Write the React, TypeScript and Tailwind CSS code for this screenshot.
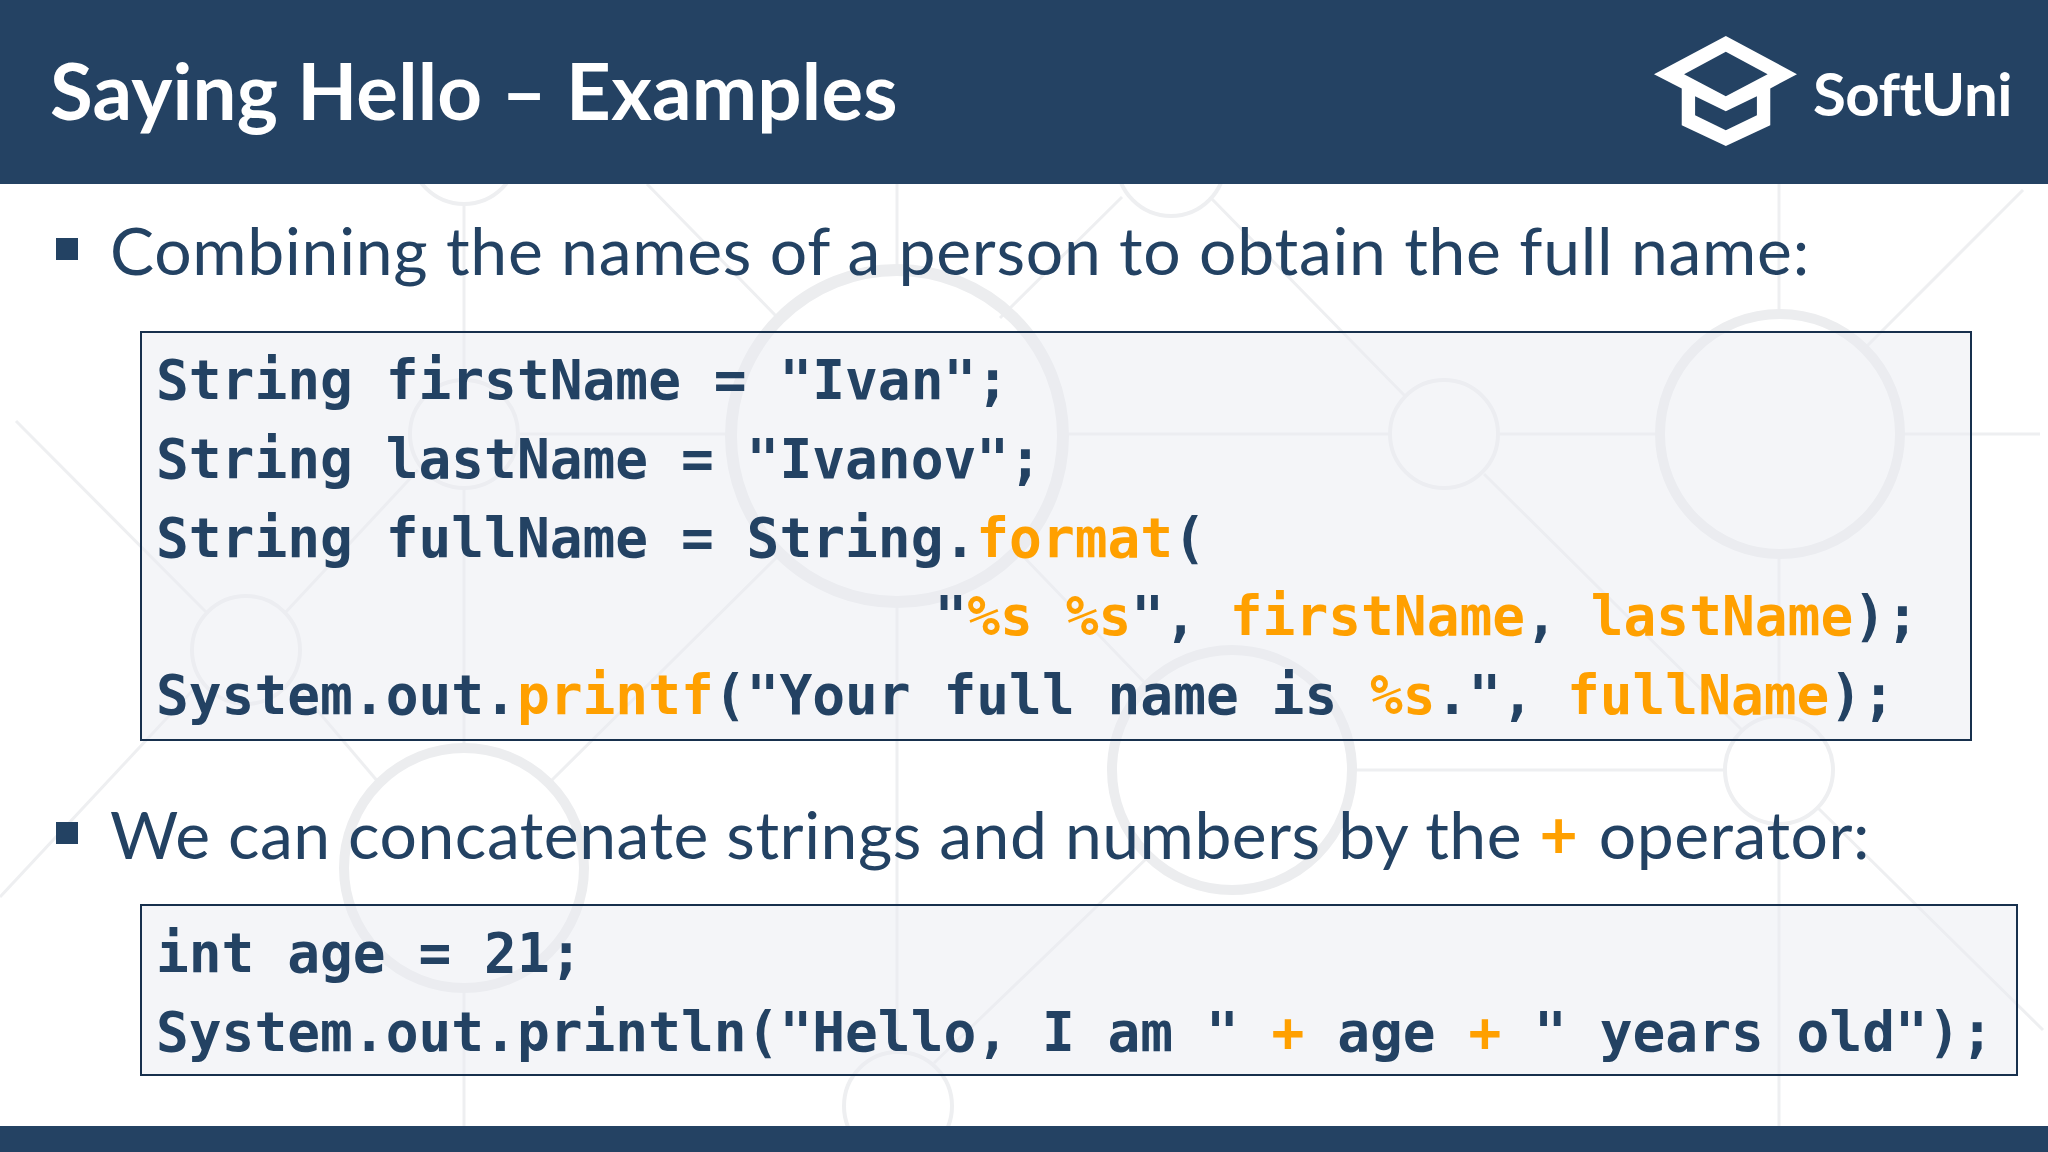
function Pattern() {
  const big: [number, number, number][] = [
    [897, 436, 166],
    [1780, 434, 120],
    [464, 868, 120],
    [1232, 770, 120],
  ];
  const small: [number, number][] = [
    [464, 434],
    [1444, 434],
    [246, 650],
    [1779, 770],
    [898, 1106],
    [464, 150],
    [1171, 162],
  ];
  const lines: [number, number, number, number][] = [
    [518, 434, 728, 434],
    [1064, 434, 1390, 434],
    [1498, 434, 1658, 434],
    [1902, 434, 2040, 434],
    [1354, 770, 1725, 770],
    [464, 204, 464, 380],
    [464, 488, 464, 746],
    [464, 990, 464, 1126],
    [897, 184, 897, 268],
    [897, 604, 897, 1052],
    [1779, 184, 1779, 312],
    [1779, 556, 1779, 716],
    [1779, 824, 1779, 1126],
    [16, 421, 208, 614],
    [284, 614, 418, 470],
    [647, 184, 777, 317],
    [777, 557, 552, 780],
    [1122, 197, 1000, 318],
    [1210, 197, 1406, 397],
    [1484, 474, 1742, 730],
    [2023, 190, 1863, 350],
    [1017, 550, 1146, 684],
    [1148, 857, 934, 1063],
    [1817, 807, 2043, 1030],
    [193, 690, 0, 897],
    [300, 690, 379, 783],
  ];
  return (
    <svg className="absolute inset-0" width="2048" height="1152" viewBox="0 0 2048 1152" fill="none">
      {lines.map(([a, b, c, d], i) => (
        <line key={i} x1={a} y1={b} x2={c} y2={d} stroke="#eeeff1" strokeWidth={3} />
      ))}
      {big.map(([x, y, r], i) => (
        <circle key={i} cx={x} cy={y} r={r} stroke="#ecedef" strokeWidth={i === 0 ? 12 : 10} />
      ))}
      {small.map(([x, y], i) => (
        <circle key={i} cx={x} cy={y} r={54} stroke="#eeeff1" strokeWidth={4} />
      ))}
    </svg>
  );
}

function Logo() {
  return (
    <div className="flex items-center gap-[16px]">
      <svg width="143" height="110" viewBox="160 108 428 329" className="mb-[2px]">
        <path
          fillRule="evenodd"
          fill="#ffffff"
          d="M375 108 588 222 508 265 508 375 375 437 243 375 243 265 160 222Z M375 155 250 222 375 288 500 222Z M283 288 283 345 375 390 468 345 468 288 375 333Z"
        />
      </svg>
      <span className="font-['Lato',sans-serif] font-bold text-[60px] leading-none text-white mt-[2px] tracking-[-0.5px]">
        SoftUni
      </span>
    </div>
  );
}

function O({ children }: { children: React.ReactNode }) {
  return <span className="text-[#ffa000]">{children}</span>;
}

function Code({ children, className }: { children: React.ReactNode; className: string }) {
  return (
    <div
      className={`relative ml-[140px] border-2 border-[#17304d] bg-[#e9ecf2]/50 pl-[14px] font-['DejaVu_Sans_Mono',monospace] font-bold text-[54.5px] leading-[78.8px] text-[#234263] whitespace-pre ${className}`}
    >
      {children}
    </div>
  );
}

function Bullet({ children, className, tracking }: { children: React.ReactNode; className: string; tracking: string }) {
  return (
    <div className={`relative flex items-start pl-[56px] ${className}`}>
      <div className="w-[22px] h-[22px] bg-[#234263] mt-[22px] mr-[32px] shrink-0" />
      <div className={`font-['Lato',sans-serif] text-[66px] leading-[68px] text-[#234263] whitespace-pre ${tracking}`}>
        {children}
      </div>
    </div>
  );
}

export default function App() {
  return (
    <div className="relative w-[2048px] h-[1152px] overflow-hidden bg-white flex flex-col">
      <Pattern />
      <header className="relative h-[184px] shrink-0 flex items-center justify-between pl-[50px] pr-[36px] bg-[#244263]">
        <h1 className="font-['Lato',sans-serif] font-bold text-[78px] leading-none text-white tracking-[0.2px] whitespace-pre mb-[4px]">
          Saying Hello – Examples
        </h1>
        <Logo />
      </header>
      <main className="relative flex-1">
        <Bullet className="mt-[32px]" tracking="tracking-[0.73px]">
          Combining the names of a person to obtain the full name:
        </Bullet>
        <Code className="mt-[47px] w-[1832px] h-[410px] pt-[8px]">
          {"String firstName = \"Ivan\";\nString lastName = \"Ivanov\";\nString fullName = String."}
          <O>format</O>
          {"(\n                        "}
          <span className="-ml-[9px]">"</span>
          <O>%s %s</O>
          {"\", "}
          <O>firstName</O>
          {", "}
          <O>lastName</O>
          {");\nSystem.out."}
          <O>printf</O>
          {"(\"Your full name is "}
          <O>%s</O>
          {".\", "}
          <O>fullName</O>
          {");"}
        </Code>
        <Bullet className="mt-[59px]" tracking="tracking-[0.53px]">
          {"We can concatenate strings and numbers by the "}
          <span className="font-bold text-[#ffa000] mr-[3px]">+</span>
          {" operator:"}
        </Bullet>
        <Code className="mt-[36px] w-[1878px] h-[172px] pt-[8px]">
          {"int age = 21;\nSystem.out.println(\"Hello, I am \" "}
          <O>+</O>
          {" age "}
          <O>+</O>
          {" \" years old\");"}
        </Code>
      </main>
      <footer className="relative h-[26px] shrink-0 bg-[#244263]" />
    </div>
  );
}
